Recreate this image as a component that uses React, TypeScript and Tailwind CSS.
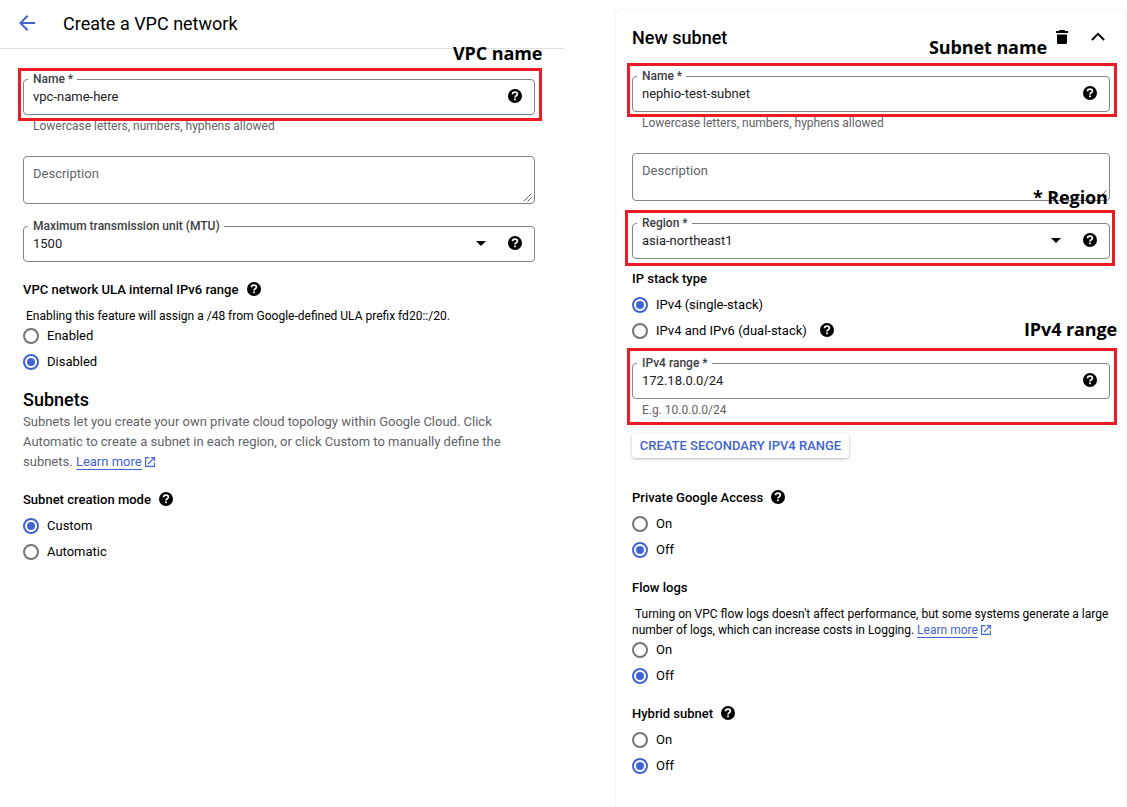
import type { ReactNode } from "react";

function HelpIcon() {
  return (
    <svg className="-mt-[2px] h-[14px] w-[14px] shrink-0" viewBox="0 0 14 14" fill="none">
      <circle cx="7" cy="7" r="7" fill="#000" />
      <path
        d="M4.500 5.300C4.500 3.900 5.600 3.100 7 3.100s2.400.8 2.400 2c0 1.600-2.400 1.700-2.400 3.400"
        stroke="#fff"
        strokeWidth="1.700"
      />
      <rect x="6.100" y="9.500" width="1.800" height="1.700" fill="#fff" />
    </svg>
  );
}

function ExternalIcon() {
  return (
    <svg
      className="ml-[3px] inline-block h-[10px] w-[10px] align-[-1px]"
      viewBox="0 0 10 10"
      fill="none"
      stroke="#4164d1"
      strokeWidth="1.1"
    >
      <path d="M4.3.6H.6v8.8h8.8V5.7M6 .6h3.4V4M9.2.8 3 7" />
    </svg>
  );
}

function Field({
  label,
  value,
  select = false,
}: {
  label: string;
  value: string;
  select?: boolean;
}) {
  return (
    <div className="relative flex h-9 items-center rounded border border-[#80868b] pr-3 pl-[9px] text-[13px] text-[#202124]">
      <span className="absolute -top-[9px] left-[4px] bg-white pr-[4px] pl-[5px] text-[12px] leading-4 font-medium whitespace-nowrap text-[#3c4043]">
        {label}
      </span>
      <span className="flex-1 leading-5">{value}</span>
      {select && (
        <svg className="-mt-[2px] mr-[22px] h-[5px] w-[10px]" viewBox="0 0 10 5">
          <path d="M0 0h10L5 5z" />
        </svg>
      )}
      <HelpIcon />
    </div>
  );
}

function Hint({ children }: { children: string }) {
  return (
    <p className="mt-px pl-[10px] text-[12px] leading-5 text-[#5f6368]">
      {children}
    </p>
  );
}

function Description() {
  return (
    <div className="mt-5 flex h-12 items-start justify-between rounded border border-[#80868b] pt-[7px] pl-[9px] text-[13px] leading-5 text-[#5f6368]">
      <span>Description</span>
      <svg
        className="mt-[29px] mr-[2px] h-[9px] w-[9px]"
        viewBox="0 0 9 9"
        stroke="#555"
        strokeWidth="0.9"
      >
        <path d="M.5 8.5l8-8M4.5 8.5l4-4" />
      </svg>
    </div>
  );
}

function Heading({ children, help = false }: { children: string; help?: boolean }) {
  return (
    <div className="flex items-center gap-[8.300px] text-[13px] leading-5 font-medium">
      <span>{children}</span>
      {help && <HelpIcon />}
    </div>
  );
}

function Radio({
  label,
  checked = false,
  help = false,
}: {
  label: string;
  checked?: boolean;
  help?: boolean;
}) {
  return (
    <div className="flex h-[26px] items-center text-[13px] leading-5">
      {checked ? (
        <span className="mr-2 flex h-4 w-4 items-center justify-center rounded-full border-2 border-[#4164d1]">
          <span className="h-2 w-2 rounded-full bg-[#4164d1]" />
        </span>
      ) : (
        <span className="mr-2 h-4 w-4 rounded-full border-2 border-[#757575]" />
      )}
      <span className="mr-[13px]">{label}</span>
      {help && <HelpIcon />}
    </div>
  );
}

function LearnMore() {
  return (
    <>
      <span className="border-b border-[#4164d1] text-[#4164d1]">Learn more</span>
      <ExternalIcon />
    </>
  );
}

function Note({ className, children }: { className: string; children: ReactNode }) {
  return (
    <span
      className={`absolute font-['Open_Sans',sans-serif] text-[18px] leading-6 font-bold tracking-[-0.1px] whitespace-nowrap ${className}`}
    >
      {children}
    </span>
  );
}

function Frame({ className }: { className: string }) {
  return <div className={`absolute border-[3px] border-[#ed1c24] ${className}`} />;
}

export default function App() {
  return (
    <div className="relative flex h-[807px] w-[1127px] overflow-hidden bg-white font-['Roboto',sans-serif] text-black">
      <section className="w-[564px]">
        <header className="flex h-[49px] items-center border-b border-[#e0e0e0] pl-[15px]">
          <svg className="-mt-[2px] h-6 w-6" viewBox="0 0 24 24" fill="#4164d1">
            <path d="M20 11H7.83l5.59-5.59L12 4l-8 8 8 8 1.41-1.41L7.83 13H20v-2z" />
          </svg>
          <h1 className="ml-6 text-[18px] leading-6">Create a VPC network</h1>
        </header>
        <div className="w-[535px] pt-[30px] pl-[23px]">
          <Field label="Name *" value="vpc-name-here" />
          <Hint>Lowercase letters, numbers, hyphens allowed</Hint>
          <Description />
          <div className="mt-[22px] mb-[18px]">
            <Field label="Maximum transmission unit (MTU)" value="1500" select />
          </div>
          <Heading help>VPC network ULA internal IPv6 range</Heading>
          <p className="mt-[9px] pl-[3px] text-[12px] leading-[14px]">
            Enabling this feature will assign a /48 from Google-defined ULA prefix fd20::/20.
          </p>
          <Radio label="Enabled" />
          <Radio label="Disabled" checked />
          <h2 className="mt-[15px] text-[18px] leading-5 font-medium">Subnets</h2>
          <p className="mt-[2px] mb-[18px] text-[13px] leading-5 whitespace-nowrap text-[#5f6368]">
            Subnets let you create your own private cloud topology within Google Cloud. Click
            <br />
            Automatic to create a subnet in each region, or click Custom to manually define the
            <br />
            subnets. <LearnMore />
          </p>
          <Heading help>Subnet creation mode</Heading>
          <div className="mt-[3px]">
            <Radio label="Custom" checked />
            <Radio label="Automatic" />
          </div>
        </div>
      </section>

      <section className="mt-[10px] ml-[52px] h-[820px] w-[510px] rounded px-4 shadow-[0_0_2px_rgba(0,0,0,0.16)]">
        <header className="mb-[10px] flex h-14 items-center">
          <h2 className="flex-1 text-[18px] leading-6 font-medium">New subnet</h2>
          <svg className="-mt-[2px] mr-[23px] h-[14px] w-3" viewBox="0 0 12 14">
            <path d="M3.5 0h5l.7 1H12v2H0V1h2.8zM1 4.4h10v8.1c0 .9-.6 1.5-1.5 1.5h-7C1.600 14 1 13.400 1 12.500z" />
          </svg>
          <svg
            className="-mt-[3px] mr-[5px] h-[9px] w-[14px]"
            viewBox="0 0 14 9"
            fill="none"
            stroke="#000"
            strokeWidth="2"
          >
            <path d="M.9 8 7 1.900 13.100 8" />
          </svg>
        </header>
        <Field label="Name *" value="nephio-test-subnet" />
        <Hint>Lowercase letters, numbers, hyphens allowed</Hint>
        <Description />
        <div className="mt-[22px] mb-[10px]">
          <Field label="Region *" value="asia-northeast1" select />
        </div>
        <Heading>IP stack type</Heading>
        <div className="mt-[3px] mb-[19px]">
          <Radio label="IPv4 (single-stack)" checked />
          <Radio label="IPv4 and IPv6 (dual-stack)" help />
        </div>
        <Field label="IPv4 range *" value="172.18.0.0/24" />
        <Hint>E.g. 10.0.0.0/24</Hint>
        <button className="mt-[13px] mb-[30px] block h-[25px] w-[217px] rounded-sm text-[13px] leading-[25px] font-medium whitespace-nowrap text-[#4164d1] shadow-[0_1px_3px_rgba(0,0,0,0.3)]">
          CREATE SECONDARY IPV4 RANGE
        </button>
        <Heading help>Private Google Access</Heading>
        <div className="mt-[3px] mb-[15px]">
          <Radio label="On" />
          <Radio label="Off" checked />
        </div>
        <Heading>Flow logs</Heading>
        <p className="mt-2 h-[31px] indent-[3px] text-[12px] leading-4 whitespace-nowrap">
          Turning on VPC flow logs doesn't affect performance, but some systems generate a large
          <br />
          number of logs, which can increase costs in Logging. <LearnMore />
        </p>
        <Radio label="On" />
        <Radio label="Off" checked />
        <div className="mt-[15px] mb-[3px]">
          <Heading help>Hybrid subnet</Heading>
        </div>
        <Radio label="On" />
        <Radio label="Off" checked />
      </section>

      <Frame className="top-[68px] left-[18px] h-[53px] w-[524px]" />
      <Frame className="top-[63px] left-[627px] h-[54px] w-[490px]" />
      <Frame className="top-[210px] left-[625px] h-[56px] w-[490px]" />
      <Frame className="top-[348px] left-[627px] h-[77px] w-[490px]" />
      <Note className="top-[41px] left-[453px]">VPC name</Note>
      <Note className="top-[35px] left-[929px]">Subnet name</Note>
      <Note className="top-[185px] left-[1033px]">* Region</Note>
      <Note className="top-[317px] left-[1024px]">IPv4 range</Note>
    </div>
  );
}
